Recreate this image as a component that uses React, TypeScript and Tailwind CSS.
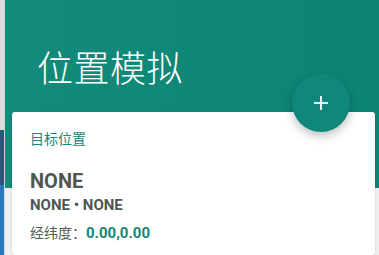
import React from "react";

export default function App() {
  return (
    <div
      className="w-[379px] h-[255px] flex overflow-hidden bg-[#f1f1f1]"
      style={{ fontFamily: "Roboto, 'Noto Sans CJK SC', sans-serif" }}
    >
      <div className="w-[4px] flex flex-col shrink-0">
        <div className="h-[130px] bg-[#d9dddc]" />
        <div className="h-[55px] bg-[#1b5d78]" />
        <div className="flex-1 bg-[#2a78c0]" />
      </div>
      <div className="w-[1px] bg-[#cfd8d6] shrink-0" />
      <div className="flex-1 relative flex flex-col">
        <div className="h-[188px] bg-gradient-to-r from-[#128b7b] to-[#0b8474] shrink-0">
          <div className="pt-[52px] pl-[32px] text-white text-[36px] leading-[36px] font-light tracking-[0.5px]">
            位置模拟
          </div>
        </div>
        <div className="mt-[-76px] ml-[7px] mr-[4px] bg-white rounded-[3px] shadow-[0_1px_3px_rgba(0,0,0,0.15)] pl-[18px] pt-[20px] h-[160px] relative">
          <div className="text-[14px] leading-[14px] text-[#16867a]">目标位置</div>
          <div className="mt-[25px] text-[20px] leading-[20px] font-bold text-[#4e5753]">NONE</div>
          <div className="mt-[7px] text-[15px] leading-[15px] font-bold text-[#4e5753]">NONE • NONE</div>
          <div className="mt-[13px] text-[15px] leading-[15px] flex items-center">
            <span className="text-[14px] text-[#555c59]">经纬度：</span>
            <span className="font-bold text-[#16877a]">0.00,0.00</span>
          </div>
        </div>
        <div className="absolute left-[287px] top-[74px] w-[58px] h-[58px] rounded-full bg-[#0f877a] shadow-[0_4px_10px_rgba(0,0,0,0.25)] flex items-center justify-center">
          <svg width="16" height="16" viewBox="0 0 16 16">
            <path d="M8 1v14M1 8h14" stroke="#e6f5f2" strokeWidth="2" />
          </svg>
        </div>
      </div>
    </div>
  );
}
